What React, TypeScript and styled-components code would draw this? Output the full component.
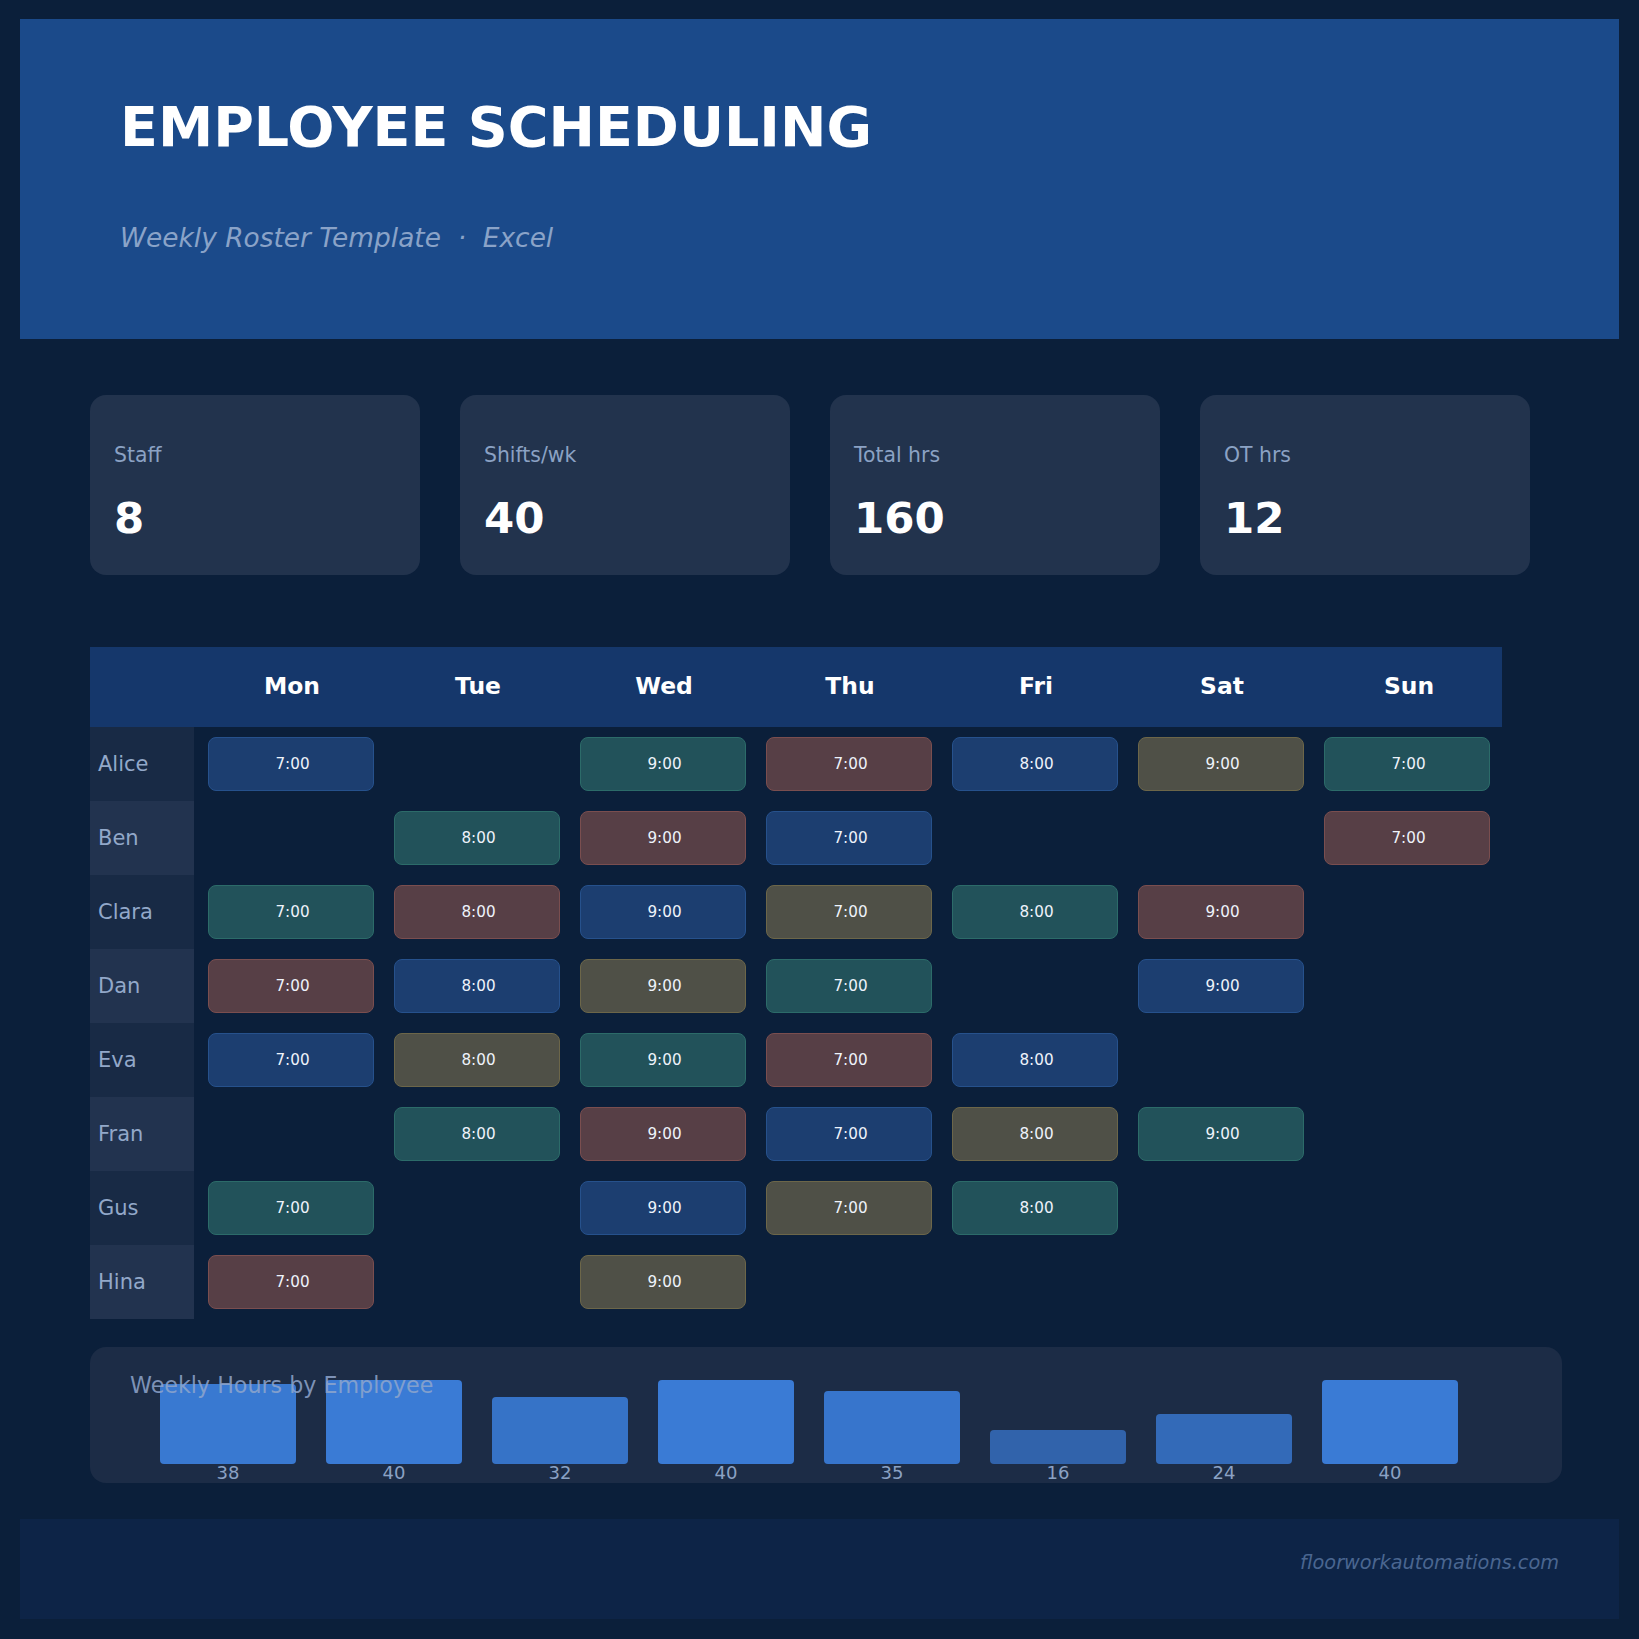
import React from "react";
import styled, { createGlobalStyle } from "styled-components";

const GlobalStyle = createGlobalStyle`
  html, body {
    margin: 0;
    padding: 0;
    background: #0b1f3a;
  }
  body {
    font-family: "DejaVu Sans", "Liberation Sans", sans-serif;
  }
  * { box-sizing: border-box; }
`;

const Page = styled.div`
  width: 1639px;
  height: 1639px;
  padding: 19px 20px 20px;
  background: #0b1f3a;
  display: flex;
  flex-direction: column;
`;

const Header = styled.header`
  height: 320px;
  background: #1b4a8a;
  padding: 80px 0 0 100px;
  display: flex;
  flex-direction: column;
`;

const Title = styled.h1`
  margin: 0;
  font-size: 55.5px;
  line-height: 1;
  font-weight: 700;
  color: #ffffff;
`;

const Subtitle = styled.div`
  margin-top: 70px;
  font-size: 26.4px;
  line-height: 1;
  font-style: italic;
  color: #8aa3c8;
  white-space: pre;
`;

const Main = styled.main`
  padding-left: 70px;
  display: flex;
  flex-direction: column;
`;

const StatRow = styled.div`
  margin-top: 56px;
  display: flex;
  gap: 40px;
`;

const StatCard = styled.div`
  width: 330px;
  height: 180px;
  border-radius: 16px;
  background: #22334d;
  padding: 50px 24px 0;
  display: flex;
  flex-direction: column;
`;

const StatLabel = styled.div`
  font-size: 20.4px;
  line-height: 1;
  color: #8ba2c4;
`;

const StatValue = styled.div`
  margin-top: 32px;
  font-size: 43.5px;
  line-height: 1;
  font-weight: 700;
  color: #ffffff;
`;

const Table = styled.div`
  margin-top: 72px;
  width: 1412px;
  display: grid;
  grid-template-columns: 108px repeat(7, 186px);
  grid-template-rows: 80px;
  grid-auto-rows: 74px;
`;

const HeadCell = styled.div<{ $last?: boolean }>`
  background: #15376b;
  display: flex;
  align-items: center;
  justify-content: center;
  padding-left: 2px;
  margin-right: ${(p) => (p.$last ? "-2px" : "0")};
  font-size: 23.4px;
  line-height: 1;
  font-weight: 700;
  color: #ffffff;
`;

const NameCell = styled.div<{ $alt: boolean }>`
  width: 104px;
  background: ${(p) => (p.$alt ? "#22334f" : "#182a45")};
  display: flex;
  align-items: center;
  padding-left: 8px;
  font-size: 21px;
  line-height: 1;
  color: #92a8c9;
`;

const DayCell = styled.div`
  padding: 10px;
  display: flex;
`;

const PALETTE = {
  blue: { bg: "#1c3e70", border: "#26518c" },
  teal: { bg: "#22525a", border: "#2c6b69" },
  red: { bg: "#573f46", border: "#7a4e4f" },
  olive: { bg: "#4f5047", border: "#6c6649" },
} as const;

type Tone = keyof typeof PALETTE;

const Pill = styled.div<{ $tone: Tone }>`
  flex: 1;
  border-radius: 8px;
  background: ${(p) => PALETTE[p.$tone].bg};
  border: 1px solid ${(p) => PALETTE[p.$tone].border};
  display: flex;
  align-items: center;
  justify-content: center;
  padding: 2px 0 0 3px;
  font-size: 15.2px;
  line-height: 1;
  color: #eef3fa;
`;

const ChartCard = styled.section`
  position: relative;
  margin-top: 28px;
  width: 1472px;
  height: 136px;
  border-radius: 16px;
  background: #1c2c46;
  padding: 0 0 1px 70px;
  display: flex;
  align-items: flex-end;
  gap: 30px;
`;

const ChartTitle = styled.div`
  position: absolute;
  left: 40px;
  top: 27px;
  z-index: 1;
  font-size: 22.2px;
  line-height: 1;
  color: rgba(143, 166, 204, 0.85);
`;

const BarCol = styled.div`
  width: 136px;
  display: flex;
  flex-direction: column;
  align-items: stretch;
`;

const Bar = styled.div`
  border-radius: 4px;
  background: #3a7bd5;
`;

const BarLabel = styled.div`
  height: 18px;
  font-size: 18px;
  line-height: 18px;
  text-align: center;
  color: #8ba2c4;
`;

const Footer = styled.footer`
  margin-top: 36px;
  height: 100px;
  background: #0d2447;
  padding: 34px 60px 0 0;
  display: flex;
  justify-content: flex-end;
  align-items: flex-start;
`;

const FooterText = styled.div`
  font-size: 19.3px;
  line-height: 1;
  font-style: italic;
  color: #4a6690;
`;

const stats = [
  { label: "Staff", value: "8" },
  { label: "Shifts/wk", value: "40" },
  { label: "Total hrs", value: "160" },
  { label: "OT hrs", value: "12" },
];

const days = ["Mon", "Tue", "Wed", "Thu", "Fri", "Sat", "Sun"];
const times = ["7:00", "8:00", "9:00", "7:00", "8:00", "9:00", "7:00"];

const b: Tone = "blue";
const t: Tone = "teal";
const r: Tone = "red";
const o: Tone = "olive";

const roster: { name: string; shifts: (Tone | null)[] }[] = [
  { name: "Alice", shifts: [b, null, t, r, b, o, t] },
  { name: "Ben", shifts: [null, t, r, b, null, null, r] },
  { name: "Clara", shifts: [t, r, b, o, t, r, null] },
  { name: "Dan", shifts: [r, b, o, t, null, b, null] },
  { name: "Eva", shifts: [b, o, t, r, b, null, null] },
  { name: "Fran", shifts: [null, t, r, b, o, t, null] },
  { name: "Gus", shifts: [t, null, b, o, t, null, null] },
  { name: "Hina", shifts: [r, null, o, null, null, null, null] },
];

const hours = [38, 40, 32, 40, 35, 16, 24, 40];

export default function App() {
  return (
    <>
      <GlobalStyle />
      <Page>
        <Header>
          <Title>EMPLOYEE SCHEDULING</Title>
          <Subtitle>{"Weekly Roster Template  ·  Excel"}</Subtitle>
        </Header>
        <Main>
          <StatRow>
            {stats.map((s) => (
              <StatCard key={s.label}>
                <StatLabel>{s.label}</StatLabel>
                <StatValue>{s.value}</StatValue>
              </StatCard>
            ))}
          </StatRow>

          <Table>
            <HeadCell />
            {days.map((d, i) => (
              <HeadCell key={d} $last={i === days.length - 1}>
                {d}
              </HeadCell>
            ))}
            {roster.map((row, ri) => (
              <React.Fragment key={row.name}>
                <NameCell $alt={ri % 2 === 1}>{row.name}</NameCell>
                {row.shifts.map((tone, di) => (
                  <DayCell key={di}>
                    {tone && <Pill $tone={tone}>{times[di]}</Pill>}
                  </DayCell>
                ))}
              </React.Fragment>
            ))}
          </Table>

          <ChartCard>
            <ChartTitle>Weekly Hours by Employee</ChartTitle>
            {hours.map((h, i) => (
              <BarCol key={i}>
                <Bar style={{ height: h * 2.1, opacity: 0.5 + h / 80 }} />
                <BarLabel>{h}</BarLabel>
              </BarCol>
            ))}
          </ChartCard>
        </Main>
        <Footer>
          <FooterText>floorworkautomations.com</FooterText>
        </Footer>
      </Page>
    </>
  );
}
